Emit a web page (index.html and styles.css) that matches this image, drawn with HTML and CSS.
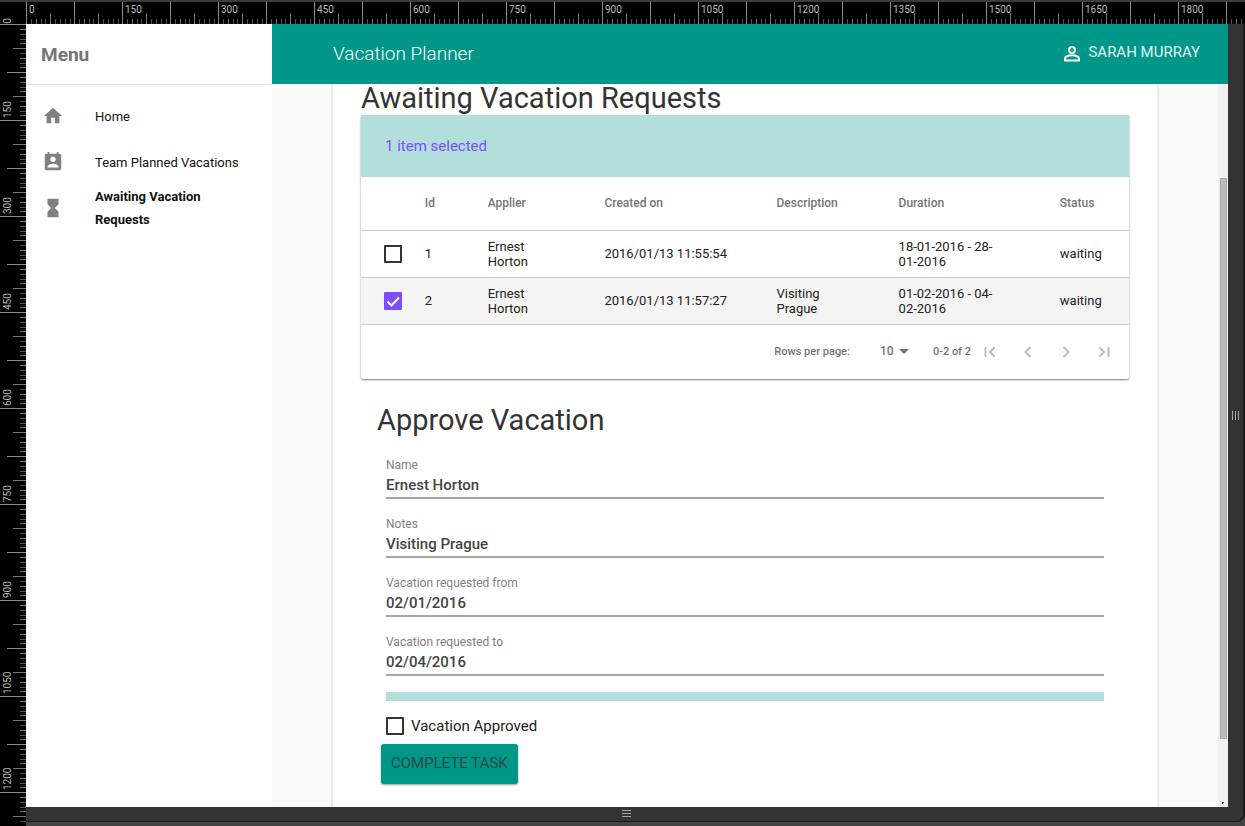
FILE: index.html
```html
<!DOCTYPE html>
<html lang="en">
<head>
<meta charset="utf-8">
<title>Vacation Planner</title>
<link rel="stylesheet" href="styles.css">
</head>
<body>
<div class="device">
  <div class="ruler ruler-x">
    <svg class="ticks" aria-hidden="true">
      <defs>
        <pattern id="tx" x="26" y="0" width="96" height="24" patternUnits="userSpaceOnUse">
          <path stroke="#4c4c4c" d="M5.5 17v5M15.5 17v5M19.5 17v5M29.5 17v5M34.5 17v5M39.5 17v5M44.5 17v5M53.5 17v5M63.5 17v5M67.5 17v5M77.5 17v5M82.5 17v5M87.5 17v5M92.5 17v5"/>
          <path stroke="#777" d="M10.5 17v5M58.5 17v5M24.5 11v11M72.5 11v11"/>
          <path stroke="#8c8c8c" d="M.5 0v22M48.5 0v22"/>
        </pattern>
      </defs>
      <rect x="26" width="100%" height="24" fill="url(#tx)"/>
    </svg>
    <div class="marks"><span>0</span><span>150</span><span>300</span><span>450</span><span>600</span><span>750</span><span>900</span><span>1050</span><span>1200</span><span>1350</span><span>1500</span><span>1650</span><span>1800</span></div>
  </div>
  <div class="ruler ruler-y">
    <svg class="ticks" aria-hidden="true">
      <defs>
        <pattern id="ty" width="26" height="96" patternUnits="userSpaceOnUse">
          <path stroke="#555" d="M20 10.5h6M20 15.5h6M20 29.5h6M20 39.5h6M20 58.5h6M20 63.5h6M20 77.5h6M20 87.5h6"/>
          <path stroke="#777" d="M20 5.5h6M20 19.5h6M20 34.5h6M20 43.5h6M20 53.5h6M20 67.5h6M20 82.5h6M20 91.5h6M13 24.5h13M13 72.5h13"/>
          <path stroke="#8c8c8c" d="M0 .5h26M7 48.5h19"/>
        </pattern>
      </defs>
      <rect width="26" height="100%" fill="url(#ty)"/>
    </svg>
    <div class="marks"><span>150</span><span>300</span><span>450</span><span>600</span><span>750</span><span>900</span><span>1050</span><span>1200</span></div>
  </div>
  <span class="origin">0</span>

  <div class="app">
    <aside class="sidebar">
      <h2 class="menu-title">Menu</h2>
      <nav class="menu">
        <a class="menu-item" href="#">
          <svg class="icon" viewBox="0 0 24 24"><path d="M10 20v-6h4v6h5v-8h3L12 3 2 12h3v8z"/></svg>
          <span>Home</span>
        </a>
        <a class="menu-item" href="#">
          <svg class="icon" viewBox="0 0 24 24"><path d="M19 3h-1V1h-2v2H8V1H6v2H5c-1.100 0-2 .9-2 2v14c0 1.100.89 2 2 2h14c1.100 0 2-.9 2-2V5c0-1.100-.9-2-2-2zm-7 3c1.660 0 3 1.340 3 3s-1.340 3-3 3-3-1.340-3-3 1.340-3 3-3zm6 12H6v-1c0-2 4-3.100 6-3.100s6 1.100 6 3.100v1z"/></svg>
          <span>Team Planned Vacations</span>
        </a>
        <a class="menu-item active" href="#">
          <svg class="icon" viewBox="0 0 24 24"><path d="M6 2v6h.01L6 8.010 10 12l-4 4 .01.01H6V22h12v-5.990h-.01L18 16l-4-4 4-3.990-.01-.01H18V2H6z"/></svg>
          <span>Awaiting Vacation Requests</span>
        </a>
      </nav>
    </aside>

    <div class="page">
      <header class="topbar">
        <h1 class="brand">Vacation Planner</h1>
        <a class="user" href="#">
          <svg class="user-icon" viewBox="0 0 18 18"><circle cx="9" cy="5" r="3" /><path d="M2 15.500v-2.200c0-2 4.500-3 7-3s7 1 7 3v2.200z"/></svg>
          <span>SARAH MURRAY</span>
        </a>
      </header>

      <div class="scroll">
        <main class="content">
          <div class="card">
            <h2 class="heading">Awaiting Vacation Requests</h2>
            <section class="table-card">
              <div class="selection">1 item selected</div>
              <table class="requests">
                <colgroup><col class="c-check"><col class="c-id"><col class="c-name"><col class="c-created"><col class="c-desc"><col class="c-dur"><col class="c-status"></colgroup>
                <thead>
                  <tr><th></th><th>Id</th><th>Applier</th><th>Created on</th><th>Description</th><th>Duration</th><th>Status</th></tr>
                </thead>
                <tbody>
                  <tr>
                    <td class="check"><label class="box"><input type="checkbox" aria-label="Select request 1"></label></td>
                    <td>1</td><td>Ernest Horton</td><td class="nowrap">2016/01/13 11:55:54</td><td></td><td>18-01-2016 - 28-01-2016</td><td>waiting</td>
                  </tr>
                  <tr class="selected">
                    <td class="check"><label class="box"><input type="checkbox" checked aria-label="Select request 2"><svg viewBox="0 0 18 18"><path d="M3.500 9.500l4 4 7.500-8"/></svg></label></td>
                    <td>2</td><td>Ernest Horton</td><td class="nowrap">2016/01/13 11:57:27</td><td>Visiting Prague</td><td>01-02-2016 - 04-02-2016</td><td>waiting</td>
                  </tr>
                </tbody>
              </table>
              <div class="pager">
                <label for="rows">Rows per page:</label>
                <span class="select"><select id="rows"><option>10</option></select><svg viewBox="0 0 10 5"><path d="M0 0h10L5 5z"/></svg></span>
                <span class="range">0-2 of 2</span>
                <button type="button" aria-label="First page"><svg viewBox="0 0 12 12"><path d="M1.500 1v10M10.500 1.500L6 6l4.500 4.500"/></svg></button>
                <button type="button" aria-label="Previous page"><svg viewBox="0 0 12 12"><path d="M8.500 1L3.500 6l5 5"/></svg></button>
                <button type="button" aria-label="Next page"><svg viewBox="0 0 12 12"><path d="M3.500 1l5 5-5 5"/></svg></button>
                <button type="button" aria-label="Last page"><svg viewBox="0 0 12 12"><path d="M10.500 1v10M1.500 1.500L6 6l-4.500 4.500"/></svg></button>
              </div>
            </section>

            <form class="approve">
              <h2 class="heading">Approve Vacation</h2>
              <div class="fields">
                <div class="field"><label for="name">Name</label><input id="name" type="text" value="Ernest Horton"></div>
                <div class="field"><label for="notes">Notes</label><input id="notes" type="text" value="Visiting Prague"></div>
                <div class="field"><label for="from">Vacation requested from</label><input id="from" type="text" value="02/01/2016"></div>
                <div class="field"><label for="to">Vacation requested to</label><input id="to" type="text" value="02/04/2016"></div>
                <div class="divider"></div>
                <label class="approved"><span class="box"><input type="checkbox"></span>Vacation Approved</label>
              </div>
              <button class="complete" type="button">COMPLETE TASK</button>
            </form>
          </div>
        </main>
        <div class="scrollbar"><div class="thumb"></div><i class="arrow"></i></div>
      </div>
    </div>
  </div>

  <div class="edge-right"><svg viewBox="0 0 8 10"><path d="M.5 0v9M3.500 0v9M6.500 0v9"/></svg></div>
  <div class="edge-bottom"><svg viewBox="0 0 10 8"><path d="M0 .5h9M0 3.500h9M0 6.500h9"/></svg></div>
</div>
</body>
</html>
```
FILE: styles.css
```css
* { box-sizing: border-box; }

body {
  margin: 0;
  background: #444;
  color: #212121;
  font: 13px/15px Roboto, "Liberation Sans", sans-serif;
}

h1, h2 { margin: 0; font-weight: 400; }
a { color: inherit; text-decoration: none; }
input, select, button { font: inherit; color: inherit; margin: 0; }

.device {
  display: grid;
  grid-template: 24px minmax(0, 1fr) 19px / 26px minmax(0, 1fr) 17px;
  height: 100vh;
  overflow: hidden;
}

/* Rulers */
.ruler {
  display: grid;
  background: #000;
  overflow: hidden;
  min-width: 0;
  min-height: 0;
}
.ruler, .origin {
  color: #bbb;
  font-size: 10px;
  line-height: 10px;
}
.ruler > * { grid-area: 1 / 1; }
.ticks { width: 100%; height: 100%; shape-rendering: crispEdges; }
.ruler-x { grid-area: 1 / 1 / 2 / 4; border-top: 2px solid #3c3c3c; }
.ruler-x .ticks { height: 22px; }
.ruler-x .marks { display: flex; padding: 3px 0 0 29px; }
.ruler-x .marks span { flex: 0 0 96px; }
.ruler-y { grid-area: 2 / 1 / 4 / 2; }
.ruler-y .marks { display: flex; flex-direction: column; }
.ruler-y .marks span {
  flex: 0 0 96px;
  writing-mode: vertical-rl;
  transform: rotate(180deg);
  padding-top: 2px;
  width: 10px;
  margin-left: 3px;
}
.origin {
  grid-area: 1 / 1 / 2 / 2;
  align-self: end;
  justify-self: start;
  margin-left: 3px;
  writing-mode: vertical-rl;
  transform: rotate(180deg);
  z-index: 1;
}

/* Browser frame */
.edge-right {
  grid-area: 2 / 3 / 3 / 4;
  display: grid;
  place-items: center;
  background: #333;
  border-right: 2px solid #1c1c1c;
}
.edge-right svg { width: 8px; height: 10px; }
.edge-bottom {
  grid-area: 3 / 2 / 4 / 4;
  display: grid;
  justify-items: center;
  align-items: center;
  margin-bottom: 4px;
  padding-right: 15px;
  background: #333;
  border-bottom: 1px solid #1c1c1c;
  border-right: 2px solid #1c1c1c;
  border-radius: 0 0 8px 0;
}
.edge-bottom svg { width: 10px; height: 8px; }
.edge-right path, .edge-bottom path { stroke: #aaa; shape-rendering: crispEdges; }

/* Application shell */
.app {
  grid-area: 2 / 2 / 3 / 3;
  display: flex;
  min-height: 0;
  background: #fafafa;
  overflow: hidden;
}
.sidebar { flex: 0 0 246px; background: #fff; }
.menu-title {
  height: 61px;
  padding-left: 15px;
  border-bottom: 1px solid #e0e0e0;
  color: #757575;
  font-size: 19px;
  font-weight: 700;
  line-height: 61px;
}
.menu { padding-top: 8px; }
.menu-item {
  display: grid;
  grid-template-columns: 53px 1fr;
  align-items: center;
  min-height: 46px;
  padding: 0 16px;
  color: #111;
  line-height: 23px;
}
.menu-item.active { font-weight: 700; }
.icon { width: 22px; height: 22px; fill: #808080; }

.page { flex: 1; display: flex; flex-direction: column; min-width: 0; }
.topbar {
  flex: none;
  display: flex;
  justify-content: space-between;
  align-items: center;
  height: 60px;
  padding: 0 28px 0 61px;
  background: #009688;
  color: #fff;
}
.brand { font-size: 19px; font-weight: 300; line-height: 24px; }
.user {
  display: flex;
  align-items: center;
  gap: 7px;
  padding-bottom: 4px;
  color: #e0f2f1;
  font-size: 15px;
}
.user-icon { width: 18px; height: 18px; margin-top: 4px; fill: none; stroke: #fff; stroke-width: 2; }

.scroll { flex: 1; display: flex; min-height: 0; }
.content { flex: 1; padding: 0 59px; min-width: 0; }
.card {
  height: 100%;
  padding: 0 28px;
  background: #fff;
  border: solid #ebebeb;
  border-width: 0 2px;
}
.heading { padding-bottom: 2px; font-size: 29px; line-height: 29px; color: #333; }
.scrollbar {
  flex: 0 0 10px;
  display: grid;
  grid-template-rows: 94fr 561fr 68fr;
  justify-items: center;
  background: #f0f0f0;
}
.thumb { grid-row: 2; width: 7px; background: #bbb; border: 1px solid #a8a8a8; }
.arrow {
  grid-row: 3;
  align-self: end;
  width: 2px;
  height: 2px;
  margin-bottom: 3px;
  border: solid #444;
  border-width: 1px 0 0 1px;
}

/* Request table */
.table-card { box-shadow: 0 1px 2px rgba(0, 0, 0, .5); border-radius: 2px; }
.selection {
  padding: 0 24px;
  background: #b2dfdb;
  color: #7c4dff;
  font-size: 15px;
  line-height: 62px;
}
.requests { width: 100%; table-layout: fixed; border-collapse: collapse; }
.c-check { width: 8.3%; }
.c-id { width: 8.2%; }
.c-name { width: 15.2%; }
.c-created { width: 22.4%; }
.c-desc { width: 15.9%; }
.c-dur { width: 21%; }
.c-status { width: 9%; }
.requests th, .requests td {
  height: 47px;
  padding: 0 60px 0 0;
  border-bottom: 1px solid #ccc;
  text-align: left;
}
.requests th { height: 53px; color: #757575; font-size: 12px; font-weight: 500; }
.requests .check { padding: 0 0 0 23px; }
.nowrap { white-space: nowrap; }
.selected { background: #f4f4f4; }

.box { display: grid; width: 18px; height: 18px; }
.box > * { grid-area: 1 / 1; }
.box input {
  appearance: none;
  width: 18px;
  height: 18px;
  border: 2px solid #333;
  border-radius: 1px;
}
.box input:checked { background: #7c4dff; border-color: #7c4dff; }
.box svg { z-index: 1; fill: none; stroke: #fff; stroke-width: 2; pointer-events: none; }

.pager {
  display: flex;
  justify-content: flex-end;
  align-items: center;
  height: 54px;
  padding-right: 6px;
  color: #757575;
  font-size: 11px;
  font-weight: 500;
}
.select { display: flex; align-items: center; margin: 0 24px 0 30px; }
.select select { appearance: none; width: 19px; padding: 0; border: 0; background: none; font-size: 12px; }
.select svg { width: 10px; height: 5px; fill: #757575; }
.pager button { display: grid; place-items: center; width: 38px; height: 38px; padding: 0; border: 0; background: none; }
.pager button svg { width: 12px; height: 12px; fill: none; stroke: #bbb; stroke-width: 2; }

/* Approval form */
.approve { padding: 27px 0 0 16px; }
.fields { padding: 21px 25px 0 9px; }
.field { display: grid; }
.field + .field { margin-top: 18px; }
.field label { color: #808080; font-size: 12px; line-height: 14px; }
.field input {
  width: 100%;
  height: 27px;
  padding: 2px 0 0;
  border: 0;
  border-bottom: 2px solid #a6a6a6;
  background: none;
  color: #444;
  font-size: 15px;
  font-weight: 500;
}
.divider { height: 9px; margin: 16px 0; background: #b2dfdb; }
.approved { display: flex; align-items: center; gap: 7px; font-size: 15px; line-height: 18px; }
.complete {
  height: 40px;
  margin: 9px 0 0 4px;
  padding: 0 10px;
  border: 0;
  border-radius: 3px;
  background: #009688;
  box-shadow: 0 1px 2px rgba(0, 0, 0, .4);
  color: #2d4b48;
  font-size: 15px;
}
```
